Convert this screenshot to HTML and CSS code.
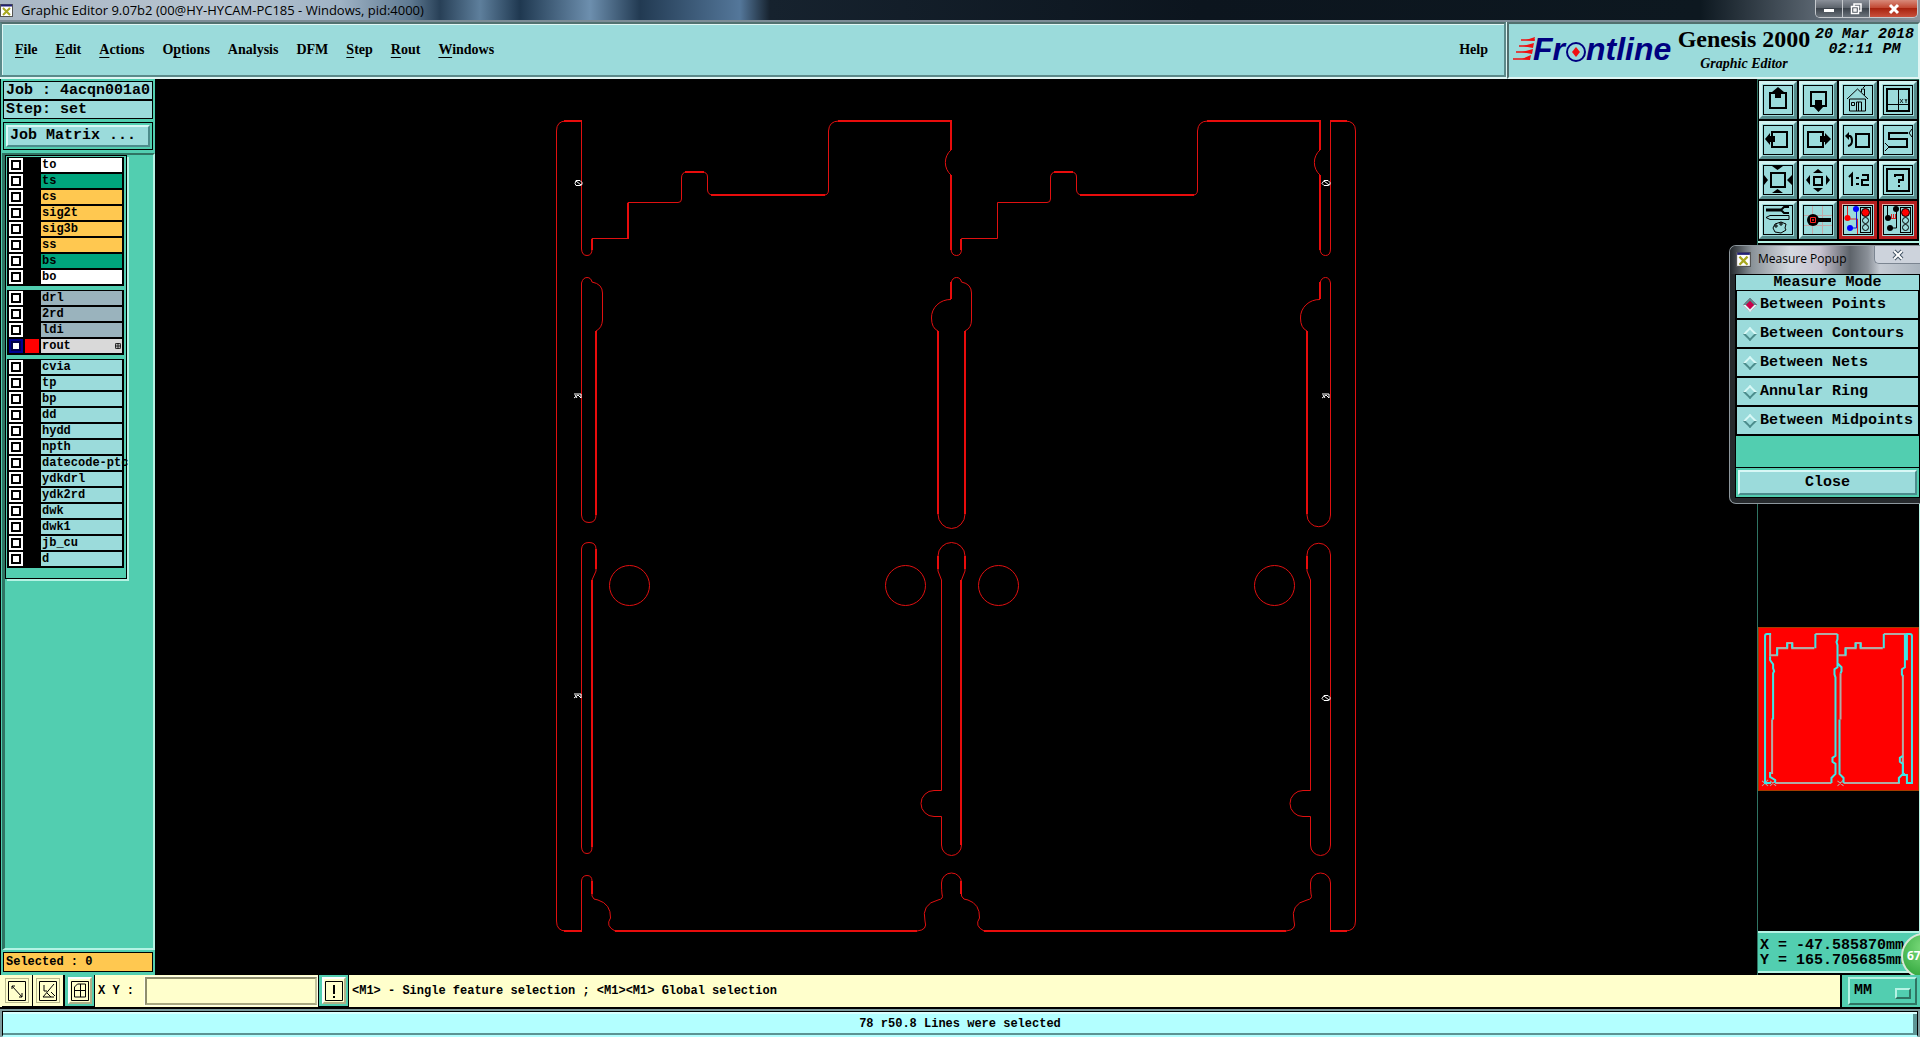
FILE: index.html
```html
<!DOCTYPE html>
<html lang="en">
<head>
    <meta charset="UTF-8">
    <meta name="viewport" content="width=device-width, initial-scale=1.0">
    <title>Graphic Editor 9.07b2</title>
    <link rel="stylesheet" href="styles.css">
</head>
<body>
    <header class="titlebar">
        <svg class="app-icon" viewBox="0 0 13 13"><rect x=".5" y=".5" width="12" height="12" fill="#fff" stroke="#555"/><path d="M1 1.5h11" stroke="#227" stroke-width="2"/><path d="M3 4l7 7M10 4l-7 7" stroke="#a8a820" stroke-width="2"/></svg>
        <span class="title-text">Graphic Editor 9.07b2 (00@HY-HYCAM-PC185 - Windows, pid:4000)</span>
        <div class="win-buttons">
            <button aria-label="Minimize"><svg viewBox="0 0 12 12"><rect x="1" y="6" width="10" height="3" fill="#fff"/></svg></button>
            <button aria-label="Restore"><svg viewBox="0 0 12 12"><path d="M4 3V1h7v7H9M1.500 3.500h7v7h-7zM4 6h2v2H4z" fill="none" stroke="#fff" stroke-width="1.500"/></svg></button>
            <button class="win-close" aria-label="Close window"><svg viewBox="0 0 12 12"><path d="M2 2l8 8M10 2l-8 8" stroke="#fff" stroke-width="3"/></svg></button>
        </div>
    </header>

    <div class="topbar">
        <nav class="menu">
            <a href="#"><u>F</u>ile</a>
            <a href="#"><u>E</u>dit</a>
            <a href="#"><u>A</u>ctions</a>
            <a href="#">O<u>p</u>tions</a>
            <a href="#">Analysis</a>
            <a href="#">DFM</a>
            <a href="#"><u>S</u>tep</a>
            <a href="#"><u>R</u>out</a>
            <a href="#"><u>W</u>indows</a>
            <a href="#" class="help">Help</a>
        </nav>
        <div class="brand">
            <svg class="logo" viewBox="0 0 162 32">
                <path d="M8 5h14M6 11h14M3 17h14M0 24h17" stroke="#f01010" stroke-width="1.500"/>
                <path d="M13 5l9-3-1 4zM10 11l11-3-1 5zM9 17l11-3-1 5zM9 24l9-4-1 5z" fill="#f01010"/>
                <text x="20" y="25">Fr</text>
                <circle cx="63" cy="17" r="9" fill="none" stroke="#000080" stroke-width="2"/>
                <path d="M63 12l4 5-4 5-4-5z" fill="#f01010"/>
                <text x="73" y="25">ntline</text>
            </svg>
            <div class="product">
                <h1>Genesis 2000</h1>
                <h2>Graphic Editor</h2>
            </div>
            <div class="clock"><span>20 Mar 2018</span><span>02:11 PM</span></div>
        </div>
    </div>

    <main class="workspace">
        <aside class="sidebar">
            <div class="job">
                <div>Job : 4acqn001a0</div>
                <div>Step: set</div>
            </div>
            <div class="matrix"><button>Job Matrix ...</button></div>
            <div class="layer-area">
                <div class="layers">
                    <ul class="layer-group">
                        <li><input type="checkbox" id="l1"><span></span><label class="white" for="l1">to</label></li>
                        <li><input type="checkbox" id="l2"><span></span><label class="green" for="l2">ts</label></li>
                        <li><input type="checkbox" id="l3"><span></span><label class="orange" for="l3">cs</label></li>
                        <li><input type="checkbox" id="l4"><span></span><label class="orange" for="l4">sig2t</label></li>
                        <li><input type="checkbox" id="l5"><span></span><label class="orange" for="l5">sig3b</label></li>
                        <li><input type="checkbox" id="l6"><span></span><label class="orange" for="l6">ss</label></li>
                        <li><input type="checkbox" id="l7"><span></span><label class="green" for="l7">bs</label></li>
                        <li><input type="checkbox" id="l8"><span></span><label class="white" for="l8">bo</label></li>
                    </ul>
                    <ul class="layer-group">
                        <li><input type="checkbox" id="l9"><span></span><label class="gray" for="l9">drl</label></li>
                        <li><input type="checkbox" id="l10"><span></span><label class="gray" for="l10">2rd</label></li>
                        <li><input type="checkbox" id="l11"><span></span><label class="gray" for="l11">ldi</label></li>
                        <li><input type="checkbox" id="l12" checked><span class="red"></span><label class="active" for="l12">rout<svg viewBox="0 0 5 5"><path d="M.5 .5h4v4h-4zM2.500 0v5M0 2.500h5" fill="none" stroke="#000" stroke-width=".7"/></svg></label></li>
                    </ul>
                    <ul class="layer-group">
                        <li><input type="checkbox" id="l13"><span></span><label for="l13">cvia</label></li>
                        <li><input type="checkbox" id="l14"><span></span><label for="l14">tp</label></li>
                        <li><input type="checkbox" id="l15"><span></span><label for="l15">bp</label></li>
                        <li><input type="checkbox" id="l16"><span></span><label for="l16">dd</label></li>
                        <li><input type="checkbox" id="l17"><span></span><label for="l17">hydd</label></li>
                        <li><input type="checkbox" id="l18"><span></span><label for="l18">npth</label></li>
                        <li><input type="checkbox" id="l19"><span></span><label for="l19">datecode-ptc</label></li>
                        <li><input type="checkbox" id="l20"><span></span><label for="l20">ydkdrl</label></li>
                        <li><input type="checkbox" id="l21"><span></span><label for="l21">ydk2rd</label></li>
                        <li><input type="checkbox" id="l22"><span></span><label for="l22">dwk</label></li>
                        <li><input type="checkbox" id="l23"><span></span><label for="l23">dwk1</label></li>
                        <li><input type="checkbox" id="l24"><span></span><label for="l24">jb_cu</label></li>
                        <li><input type="checkbox" id="l25"><span></span><label for="l25">d</label></li>
                    </ul>
                </div>
            </div>
            <div class="selected">Selected : 0</div>
        </aside>

        <section class="canvas">
            <svg viewBox="155 79 1602 896">
                <g class="rout">
                    <!-- frame ends -->
                    <path d="M581.500 931H566Q556.500 931 556.500 921V131Q556.500 121 566 121H581.500"/>
                    <path d="M1330.500 121H1345Q1355.500 121 1355.500 131V921Q1355.500 931 1345 931H1330.500"/>
                    <!-- upper edge -->
                    <path d="M581.500 121V249Q582 255.500 587 255.500T592 249V238.500H628V202.500H678Q681.500 202.500 681.500 199V178Q681.500 172 687 172H702Q707.500 172 707.500 177V190Q708 195 713 195H824Q828.500 195 828.500 190V131Q829 121 839 121H951V150A15 16 0 0 0 951 175V249Q951.500 255.500 956.500 255.500T961.500 249V238.500H997.500V202.500H1047Q1050.500 202.500 1050.500 199V178Q1050.500 172 1056 172H1071Q1076.500 172 1076.500 177V190Q1077 195 1082 195H1193Q1197.500 195 1197.500 190V131Q1198 121 1208 121H1320V150A15 16 0 0 0 1320 175V249Q1320.500 255.500 1325.500 255.500T1330.500 249V121"/>
                    <!-- upper slots -->
                    <path d="M581.500 515V283Q583 277.500 587 277.500T592 282Q602.500 284 602.500 293V320Q602 328 596 331V515Q596 522.500 589 522.500T581.500 515Z"/>
                    <path d="M951 299V283Q952.500 277.500 956.500 277.500T961.500 282Q971.500 284 971.500 293V320Q971.500 328 965 331V514A13.500 14.500 0 0 1 938 514V331Q931.500 328 931.500 318A19 18 0 0 1 951 299.500"/>
                    <path d="M1320 299V283Q1321.500 277.500 1325.500 277.500T1330.500 283V515A11.500 11.500 0 0 1 1307 515V331Q1300.500 328 1300.500 318A19 18 0 0 1 1320 299.500"/>
                    <!-- lower slots -->
                    <path d="M581.500 549Q582 542.500 589 542.500T596 549V571L592 580V847Q592 853.500 587 853.500T581.500 847Z"/>
                    <path d="M938 556A13.500 13.500 0 0 1 965 556V571L961.500 580V845A10 10.500 0 0 1 941.500 845V816.500H934A12.500 12.500 0 0 1 934 790.500H941.500V580L938 571Z"/>
                    <path d="M1307 555A11.500 11.500 0 0 1 1330.500 555V845A10 10.500 0 0 1 1310.500 845V816.500H1303A12.500 12.500 0 0 1 1303 790.500H1310.500V580L1307 571Z"/>
                    <!-- bottom edge -->
                    <path d="M581.500 931V881Q582 875.500 587 875.500T592 881V896Q593 900 598 900Q611 904 610.500 918Q605 926 615 931H917Q928 930 925 921Q921 904 938 900Q944 899 942 894Q941.500 890 941.500 883A10 10 0 0 1 961.500 883V896Q963 900 968 900Q980 904 979.500 918Q974 926 984 931H1286Q1297 930 1294 921Q1290 904 1307 900Q1313 899 1311 894Q1310.500 890 1310.500 883A10 10 0 0 1 1330.500 883V931"/>
                    <circle cx="629.500" cy="585.500" r="20"/>
                    <circle cx="905.500" cy="585.500" r="20"/>
                    <circle cx="998.500" cy="585.500" r="20"/>
                    <circle cx="1274.500" cy="585.500" r="20"/>
                    <!-- double width runs -->
                    <g class="wide">
                        <path d="M564 121H582M838 121H951V150M951 175V250M1207 121H1320V150M1320 175V250M1330 121H1347"/>
                        <path d="M711 195H825M1080 195H1194M592 250V239M628 239V203M685 172H704M1054 172H1073M961 250V239"/>
                        <path d="M596 331V515M951 282V299M938 331V514M965 331V514M1320 282V299M1307 331V514"/>
                        <path d="M596 549V569M592 580V847M938 556V569M965 556V569M961 580V845M1307 556V569"/>
                        <path d="M592 881V894M961 881V894M564 931H582M615 931H917M984 931H1286M1330 931H1347"/>
                    </g>
                </g>
                <g class="marks">
                    <path d="M576 180.500h4l2 2v2l-2 1h-4l-1-2zM576 181l5 4"/>
                    <path d="M574 394h7v4M574 398l4-3 3 3M575 395l2 3"/>
                    <path d="M574 694h7v4M574 698l4-3 3 3M575 695l2 3"/>
                    <path d="M1324 180.500h4l2 2v2l-2 1h-4l-2-2zM1324 181l5 4"/>
                    <path d="M1322 394h7v4M1322 398l4-3 3 3M1323 395l2 3"/>
                    <path d="M1324 695.500h4l2 2v2l-2 1h-4l-2-2zM1324 696l5 4"/>
                </g>
            </svg>
        </section>

        <aside class="tools">
            <div class="tool-grid">
                <button aria-label="Pan up"><svg viewBox="0 0 30 30"><rect x="7" y="8" width="16" height="15" class="bold"/><path class="fill" d="M15 2l6 5h-3v6h-6V7H9z"/></svg></button>
                <button aria-label="Pan down"><svg viewBox="0 0 30 30"><rect x="8" y="7" width="15" height="14" class="bold"/><path class="fill" d="M12 15h7v6h2l-5.500 6L10 21h2z"/></svg></button>
                <button aria-label="Home"><svg viewBox="0 0 30 30"><path d="M4 14L14.500 4 25 14M6.500 14v12h16V14zM13.500 26v-9h5v9M15.500 26v-9M8.500 17.500h3v3h-3zM18.500 7V4h3v6M20 3l2-2"/></svg></button>
                <button aria-label="Window coordinates"><svg viewBox="0 0 30 30"><rect x="4" y="4" width="22" height="22" class="bold"/><path d="M15.500 4v22M4 19.500h22"/><path d="M17 14l3 4M20 14l-3 4M22 14l1 2 1-2M23 16v2" stroke-width=".8"/></svg></button>

                <button aria-label="Pan left"><svg viewBox="0 0 30 30"><rect x="9" y="7" width="15" height="15" class="bold"/><path class="fill" d="M2 14l5-6v3h5v6H7v3z"/></svg></button>
                <button aria-label="Pan right"><svg viewBox="0 0 30 30"><rect x="5" y="7" width="15" height="15" class="bold"/><path class="fill" d="M28 14l-6-6v3h-5v6h5v3z"/></svg></button>
                <button aria-label="Previous view"><svg viewBox="0 0 30 30"><rect x="13" y="9" width="13" height="13" class="bold"/><path class="bold" d="M4 11h3q2 1 2 5t-4 5"/><path class="fill" d="M2 11l4-4v8z"/></svg></button>
                <button aria-label="Serpentine"><svg viewBox="0 0 30 30"><path class="bold" d="M25 8H6v6h18v8H6"/><path d="M29 4l-3 4 3 4M2 18l4 4-4 4"/></svg></button>

                <button aria-label="Zoom in"><svg viewBox="0 0 30 30"><rect x="8" y="8" width="14" height="14" class="bold"/><path class="fill" d="M9 1h11l-5.500 4zM9 28h11l-5.500-4zM1 10v10l4-5zM29 10v10l-5-5z"/></svg></button>
                <button aria-label="Zoom out"><svg viewBox="0 0 30 30"><rect x="11" y="12" width="8" height="8" class="bold"/><path class="fill" d="M10 8h10l-5-4zM10 23h10l-5 4zM7 10v10l-4-5zM23 10v10l4-5z"/></svg></button>
                <button aria-label="Scale"><svg viewBox="0 0 30 30"><path class="bold" d="M6 12l3-3v12M19 10h6v5h-6v5h7"/><path class="fill" d="M13 12h3v2h-3zM13 18h3v2h-3z"/></svg></button>
                <button aria-label="Query"><svg viewBox="0 0 30 30"><rect x="4" y="4" width="22" height="22" class="bold"/><path class="bold" d="M12 12v-2h8v5h-4v3M16 20v2"/></svg></button>

                <button aria-label="Options"><svg viewBox="0 0 30 30"><path stroke-width="3" d="M3 5h15"/><path class="bold" d="M26 2h-5l-3 3 3 3h5"/><path d="M7 10.500h19v4H7l-4-2zM12 19l6-2 5 2-1 4 1 2-5 3-6-1-2-4zM12 22h2v-2h-2zM17 20h2v-2h-2z"/></svg></button>
                <button aria-label="Snap"><svg viewBox="0 0 30 30"><path d="M9.500 1v28M19.500 1v28M1 10.500h28M1 20.500h28" stroke="#c3a9a9"/><circle class="fill" cx="10" cy="15" r="6"/><path stroke-width="4" d="M14 15h14"/><path d="M7.500 12.500h5v5h-5zM9.500 14.500h1v1h-1z" stroke="#f22"/></svg></button>
                <button class="alert" aria-label="Net highlight"><svg viewBox="0 0 30 30"><path d="M4.500 1v11l2 2h8v15" stroke="#d22"/><path d="M13.500 4v19H8" stroke="#11d"/><circle cx="4.500" cy="13" r="3" fill="red"/><circle cx="13" cy="4" r="3" fill="#00f"/><circle cx="7" cy="23" r="3" fill="#00f"/><rect x="17.500" y="2.500" width="10" height="25"/><circle cx="22.500" cy="7.500" r="4" fill="red" class="ring"/><circle cx="22.500" cy="15.500" r="3" class="ring"/><circle cx="22.500" cy="22.500" r="3" class="ring"/></svg></button>
                <button class="alert" aria-label="Measure net"><svg viewBox="0 0 30 30"><path d="M4.500 1v12M13.500 4v19H8"/><path d="M5 13.500h8M8.500 9v5M10.500 9v5M12.500 9v5" stroke="#d22"/><g class="fill"><circle cx="5" cy="13" r="3"/><circle cx="13" cy="4" r="3"/><circle cx="7" cy="23" r="3"/></g><rect x="17.500" y="2.500" width="10" height="25"/><circle cx="22.500" cy="7.500" r="4" fill="red" class="ring"/><circle cx="22.500" cy="15.500" r="3" class="ring"/><circle cx="22.500" cy="22.500" r="3" class="ring"/></svg></button>
            </div>
            <div class="overview">
                <svg viewBox="0 0 160 163">
                    <rect x=".5" y=".5" width="159" height="162" fill="red" stroke="#a63c00"/>
                    <g fill="none" stroke="#b4a9a4" stroke-width="2">
                        <path d="M12 28h7v-7h10v-5h5v5h22M57 7h22M80 28h7v-7h10v-5h5v5h22M125 7h22M17 155h56M85 155h56M14 92v54M82 46v46M144 48v98M12 7v22"/>
                        <path d="M4 153l6 5M10 152l-6 6M12 153l6 5M18 152l-6 6M79 153l6 5M85 152l-6 6" stroke-width="1"/>
                    </g>
                    <g fill="none" stroke="#3ee6e6" stroke-width="2">
                        <path d="M13 7H9Q7 7 7 9V155H13M12 29V33L15 37V41L16 44L15 46V91L14 92M12 144V149L17 152V155M57 21V7M19 28V21M29 21V16M34 16V21"/>
                        <path d="M79 7V12L78 15L79 18V40L76 42V47L77 50V128L74 130V134L77 136V146L73 150V155M79 28V36L83 40V44L82 46M81 92V146L85 150V155M87 28V21M97 21V16M102 16V21"/>
                        <path d="M125 21V7M146 7V40L143 42V47L144 49M148 7V33M144 128L141 130V134L144 136V146L140 150V155M145 145V147H148V155H153V9Q153 7 151 7H147"/>
                    </g>
                </svg>
            </div>
            <div class="coords">
                <span>X = -47.585870mm</span>
                <span>Y = 165.705685mm</span>
                <div class="ball">67</div>
            </div>
        </aside>
    </main>

    <div class="command">
        <button aria-label="Snap mode"><svg viewBox="0 0 18 20"><path d="M.5 .5h17v19H.5zM4 5l10 11M4 8V5h3M14 12v4h-3"/></svg></button>
        <button aria-label="Angle mode"><svg viewBox="0 0 18 20"><path d="M.5 .5h17v19H.5zM15 3L4 16h11M5 4v6h3M8 12l4 4M12 11l4 4"/></svg></button>
        <div class="slot"><button aria-label="Grid"><svg viewBox="0 0 18 20"><path d="M.5 .5h17v19H.5zM3.500 6l3-3h8v13h-11zM9.500 3v13M3 9.500h12"/></svg></button></div>
        <label for="xy">X Y :</label>
        <input type="text" id="xy">
        <div class="slot"><button aria-label="Alert"><svg viewBox="0 0 18 20"><path d="M.5 .5h17v19H.5z"/><path d="M9 4v9M9 15v2" stroke-width="2"/></svg></button></div>
        <p>&lt;M1&gt; - Single feature selection ; &lt;M1&gt;&lt;M1&gt; Global selection</p>
        <div class="units"><select aria-label="Units"><option>MM</option><option>Inch</option></select></div>
    </div>
    <footer class="status"><div>78 r50.8 Lines were selected</div></footer>

    <div class="popup">
        <div class="popup-title">
            <svg class="app-icon" viewBox="0 0 13 13"><rect x=".5" y=".5" width="12" height="12" fill="#fff" stroke="#555"/><path d="M1 1.500h11" stroke="#227" stroke-width="2"/><path d="M3 4l7 7M10 4l-7 7" stroke="#a8a820" stroke-width="2"/></svg>
            <span>Measure Popup</span>
            <button aria-label="Close popup"><svg viewBox="0 0 12 12"><path d="M2 2l8 8M10 2l-8 8" stroke="#456" stroke-width="4"/><path d="M2 2l8 8M10 2l-8 8" stroke="#fff" stroke-width="2"/></svg></button>
        </div>
        <form class="popup-body">
            <h3>Measure Mode</h3>
            <label><input type="radio" name="mode" checked>Between Points</label>
            <label><input type="radio" name="mode">Between Contours</label>
            <label><input type="radio" name="mode">Between Nets</label>
            <label><input type="radio" name="mode">Annular Ring</label>
            <label><input type="radio" name="mode">Between Midpoints</label>
            <div class="popup-foot"><button type="button">Close</button></div>
        </form>
    </div>
</body>
</html>
```
FILE: styles.css
```css
* {
    box-sizing: border-box;
}

body {
    margin: 0;
    height: 100vh;
    display: flex;
    flex-direction: column;
    overflow: hidden;
    background: #000;
    color: #000;
    font: bold 12px/16px "Liberation Mono", monospace;
}

button, input, select {
    font: inherit;
    color: inherit;
    border-radius: 0;
    margin: 0;
    padding: 0;
}

svg {
    display: block;
}

/* window title */
.titlebar {
    height: 22px;
    display: flex;
    align-items: flex-start;
    gap: 8px;
    background: linear-gradient(90deg, #a9b6c4 0, #b7c4d0 220px, #9fb3c5 340px, #5f7a92 410px, #284057 440px, #5e7f9c 480px, #1f3850 520px, #6d8fae 590px, #223a52 640px, #54779a 740px, #16222e 770px, #0c151e 1200px, #0d1820 1700px, #5d6873 1820px, #8d969e 100%);
    border-bottom: 2px solid #7d8c96;
}

.app-icon {
    width: 13px;
    height: 13px;
    flex: none;
    margin-top: 4px;
}

.title-text {
    font: 13px/21px "Open Sans", sans-serif;
    white-space: nowrap;
}

.win-buttons {
    display: flex;
    margin-left: auto;
    margin-right: 2px;
    border: 1px solid #c5c9cd;
    border-top: 0;
    border-radius: 0 0 5px 5px;
    overflow: hidden;
}

.win-buttons button {
    width: 27px;
    height: 17px;
    border: 0;
    border-right: 1px solid #c5c9cd;
    background: linear-gradient(#8a9099, #596068 50%, #3c434b 50%, #6a727a);
    display: grid;
    place-items: center;
}

.win-buttons .win-close {
    width: 47px;
    border-right: 0;
    background: linear-gradient(#d88a7a, #c0422c 50%, #a8230f 50%, #c9503c);
}

.win-buttons svg {
    width: 12px;
    height: 12px;
}

/* menu and brand */
.topbar {
    display: flex;
    gap: 1px;
    height: 57px;
    background: #e0f6f4;
}

.menu {
    flex: 1;
    display: flex;
    align-items: center;
    gap: 18px;
    padding: 0 16px 0 13px;
    background: #9bdbdb;
    border: 2px solid #5b8a8a;
    border-top-color: #52706f;
    box-shadow: inset 0 1px #e0f6f4, inset 1px 0 #e0f6f4;
    margin-bottom: 2px;
}

.menu a {
    font: bold 14px/20px "Liberation Serif", serif;
    color: #000;
    text-decoration: none;
}

.menu u {
    text-underline-offset: 3px;
}

.menu .help {
    margin-left: auto;
}

.brand {
    display: flex;
    width: 413px;
    padding: 1px 2px 0 4px;
    background: #9bdbdb;
    border: 2px solid #52706f;
    border-bottom-color: #e0f6f4;
    border-right-color: #e0f6f4;
    white-space: nowrap;
}

.logo {
    width: 162px;
    height: 32px;
    margin-top: 10px;
    overflow: visible;
}

.logo text {
    font: italic bold 32px "Liberation Sans", sans-serif;
    fill: #000080;
}

.product {
    width: 138px;
    text-align: center;
}

.product h1 {
    margin: 0;
    font: bold 24px/28px "Liberation Serif", serif;
}

.product h2 {
    margin: 0;
    font: italic bold 14px/22px "Liberation Serif", serif;
}

.clock {
    flex: 1;
    display: flex;
    flex-direction: column;
    align-items: center;
    font: italic bold 15px/15px "Liberation Mono", monospace;
    padding-top: 2px;
}

/* main area */
.workspace {
    flex: 1;
    min-height: 0;
    display: flex;
}

.sidebar {
    width: 155px;
    display: flex;
    flex-direction: column;
    padding: 2px 2px 3px;
    background: #52ceb0;
    border-left: 1px solid #000;
}

.job {
    border: 1px solid #000;
    background: #000;
    display: grid;
    gap: 2px;
    margin-bottom: 3px;
}

.job div {
    background: #9bdbdb;
    padding-left: 2px;
    font-size: 15px;
    line-height: 17px;
}

.matrix {
    border: 1px solid #000;
    padding: 2px;
    margin-bottom: 3px;
}

.matrix button {
    display: block;
    width: 100%;
    height: 22px;
    padding-left: 2px;
    background: #9bdbdb;
    border: 2px solid;
    border-color: #d8f8f6 #4c8c8c #4c8c8c #d8f8f6;
    font-size: 15px;
    text-align: left;
}

.layer-area {
    flex: 1;
    border: 2px solid;
    border-color: #2f7463 #b5f3e4 #b5f3e4 #2f7463;
    border-left-width: 3px;
    margin: 0 -2px 2px -1px;
}

.layers {
    width: 122px;
    border: 1px solid #000;
    box-shadow: 2px 2px #b5f3e4;
    padding: 1px 2px 6px 1px;
}

.layer-group {
    list-style: none;
    margin: 0 0 4px;
    padding: 1px 0 0;
    background: #000;
}

.layer-group li {
    display: grid;
    grid-template-columns: 14px 14px 1fr;
    gap: 2px;
    height: 16px;
    padding: 0 2px 2px;
}

.layer-group input {
    appearance: none;
    width: 14px;
    height: 14px;
    border: 2px solid #fff;
    background: #fff;
    box-shadow: inset 0 0 0 2px #000;
}

.layer-group input:checked {
    border-color: #000090;
    box-shadow: inset 0 0 0 2px #00004a;
}

.layer-group label {
    display: flex;
    align-items: center;
    justify-content: space-between;
    min-width: 0;
    height: 14px;
    padding: 0 1px;
    background: #9bdbdb;
    line-height: 14px;
    white-space: nowrap;
}

.layer-group label svg {
    width: 6px;
    height: 6px;
}

.layer-group .white { background: #fff; }
.layer-group .green { background: #00a57d; }
.layer-group .orange { background: #ffc850; }
.layer-group .gray { background: #9ab3bd; }
.layer-group .active { background: #d9d9d9; }
.layer-group .red { background: #f00; }

.selected {
    border: 1px solid #000;
    background: #ffc850;
    padding: 0 2px;
    line-height: 18px;
}

.canvas {
    flex: 1;
    min-width: 0;
}

.canvas svg {
    width: 100%;
    height: 100%;
}

.rout {
    fill: none;
    stroke: #e01010;
}

.rout .wide {
    stroke: #e80c0c;
    stroke-width: 2;
}

.marks {
    fill: none;
    stroke: #fff;
}

/* right column */
.tools {
    width: 163px;
    display: flex;
    flex-direction: column;
    border-left: 1px solid #2f7463;
    border-right: 1px solid #b5f3e4;
}

.tool-grid {
    display: grid;
    grid-template-columns: repeat(4, 38px);
    gap: 2px;
    padding: 1px 1px 2px;
    border-top: 1px solid #2f7463;
    border-bottom: 2px solid #b5f3e4;
}

.tool-grid button {
    height: 38px;
    background: #9bdbdb;
    border: 3px solid;
    border-color: #d0f2f0 #568c8c #568c8c #d0f2f0;
    padding: 1px;
}

.tool-grid svg {
    width: 30px;
    height: 30px;
    outline: 1px solid #000;
    outline-offset: -1px;
    fill: none;
    stroke: #000;
}

.tool-grid .bold {
    stroke-width: 2;
}

.tool-grid circle,
.tool-grid .fill {
    stroke: none;
}

.tool-grid .fill {
    fill: #000;
}

.tool-grid .ring {
    stroke: #000;
}

.tool-grid .alert {
    border-color: #b41e1e;
    box-shadow: inset 1px 1px #e8b0a8;
}

.overview {
    flex: 1;
    display: flex;
    align-items: flex-end;
    padding-bottom: 140px;
}

.overview svg {
    width: 100%;
}

.coords {
    position: relative;
    display: flex;
    flex-direction: column;
    padding: 5px 3px 3px 2px;
    background: #52ceb0;
    border-top: 2px solid #b5f3e4;
    border-bottom: 2px solid #b5f3e4;
    margin-bottom: 2px;
    font-size: 15px;
    line-height: 15px;
    white-space: nowrap;
}

.ball {
    position: absolute;
    top: 0;
    right: -28px;
    width: 46px;
    height: 46px;
    padding-left: 4px;
    border: 2px solid #d9e8d9;
    border-radius: 50%;
    background: radial-gradient(circle at 50% 30%, #7ddc7d, #3cae46 75%);
    color: #fff;
    font: bold 12px/42px "Open Sans", sans-serif;
}

/* command line */
.command {
    display: flex;
    height: 34px;
    background: #ffffcc;
    border-bottom: 2px solid #000;
    padding-left: 2px;
}

.command button {
    width: 31px;
    display: grid;
    place-items: center;
    background: #ffffcc;
    border: 1px solid #000;
    border-width: 0 1px 1px 0;
    box-shadow: inset 0 0 0 3px #ffffcc, inset 0 0 0 4px #b8b88c;
}

.command button svg {
    width: 18px;
    height: 20px;
    fill: none;
    stroke: #000;
}

.command .slot {
    width: 31px;
    display: grid;
    place-items: center;
    background: #52ceb0;
    border: 1px solid #000;
    border-width: 0 1px 1px;
}

.command .slot button {
    width: 24px;
    height: 27px;
    border: 2px solid;
    border-color: #fff #b0b088 #b0b088 #fff;
    box-shadow: none;
}

.command label {
    width: 49px;
    padding-left: 3px;
    line-height: 33px;
    white-space: nowrap;
}

.command input {
    width: 172px;
    margin: 2px 1px;
    padding: 0 5px;
    background: #ffffcc;
    border: 2px solid;
    border-color: #8e8e6c #c4c49c #a8a880 #8e8e6c;
    outline: 1px solid #ffffe8;
}

.command p {
    flex: 1;
    margin: 0;
    padding-left: 3px;
    line-height: 33px;
    white-space: nowrap;
}

.units {
    position: relative;
    width: 80px;
    padding: 2px 3px 2px 6px;
    background: #52ceb0;
    border-left: 2px solid #000;
}

.units select {
    appearance: none;
    width: 100%;
    height: 28px;
    padding-left: 4px;
    background: #52ceb0;
    border: 2px solid;
    border-color: #b5f3e4 #2f7463 #2f7463 #b5f3e4;
    font-size: 15px;
}

/* option menu knob */
.units::after {
    content: "";
    position: absolute;
    right: 9px;
    top: 13px;
    width: 12px;
    height: 7px;
    border: 2px solid;
    border-color: #b5f3e4 #2f7463 #2f7463 #b5f3e4;
    pointer-events: none;
}

.status {
    height: 28px;
    padding: 2px 2px 0;
    background: #7f9c9e;
}

.status div {
    height: 26px;
    background: #b3ffff;
    border: 1px solid #000;
    border-bottom: 2px solid #b3ffff;
    box-shadow: inset 0 2px #d9ffff, inset -4px -2px #5c9494;
    line-height: 24px;
    text-align: center;
}

/* measure popup */
.popup {
    position: absolute;
    top: 245px;
    right: 0;
    width: 191px;
    padding: 0 0 5px 5px;
    background: #262a2d;
    border: 1px solid #8d979d;
    border-right: 0;
    border-radius: 7px 0 0 7px;
}

.popup-title {
    height: 28px;
    display: flex;
    gap: 7px;
    padding-left: 6px;
    margin-left: -5px;
    border-radius: 6px 0 0 0;
    background: linear-gradient(90deg, #23282c, #8a9298 22px, #d4d9e0 60px, #c9c3d0 90px, #5d636a 120px, #8a9098 138px, #c6ccd4 150px, #aab4be);
    font: 12px/26px "Open Sans", sans-serif;
    white-space: nowrap;
}

.popup-title .app-icon {
    width: 15px;
    height: 15px;
    margin-top: 6px;
}

.popup-title button {
    width: 46px;
    height: 18px;
    margin-left: auto;
    display: grid;
    place-items: center;
    border: 1px solid #7b8591;
    border-width: 0 0 1px 1px;
    border-radius: 0 0 0 5px;
    background: #cdd3dc;
}

.popup-title button svg {
    width: 12px;
    height: 12px;
}

.popup-body {
    background: #52ceb0;
    border: 1px solid #000;
    font-size: 15px;
}

.popup-body h3 {
    margin: 0;
    background: #9bdbdb;
    border-bottom: 1px solid #000;
    font-size: 15px;
    line-height: 15px;
    text-align: center;
}

.popup-body label {
    display: flex;
    align-items: center;
    gap: 5px;
    height: 29px;
    padding-left: 8px;
    background: #9bdbdb;
    border: 1px solid #000;
    border-bottom-width: 2px;
    border-top: 0;
    white-space: nowrap;
}

.popup-body input {
    appearance: none;
    width: 10px;
    height: 10px;
    border: 2px solid;
    border-color: #d8f8f6 #4c8c8c #4c8c8c #d8f8f6;
    transform: rotate(45deg);
}

.popup-body input:checked {
    background: #c8004b;
    border-color: #568c8c #d8f8f6 #d8f8f6 #568c8c;
}

.popup-foot {
    margin-top: 31px;
    padding: 2px;
    border-top: 1px solid #000;
}

.popup-foot button {
    display: block;
    width: 100%;
    height: 25px;
    background: #9bdbdb;
    border: 2px solid;
    border-color: #d8f8f6 #4c8c8c #4c8c8c #d8f8f6;
}
```
